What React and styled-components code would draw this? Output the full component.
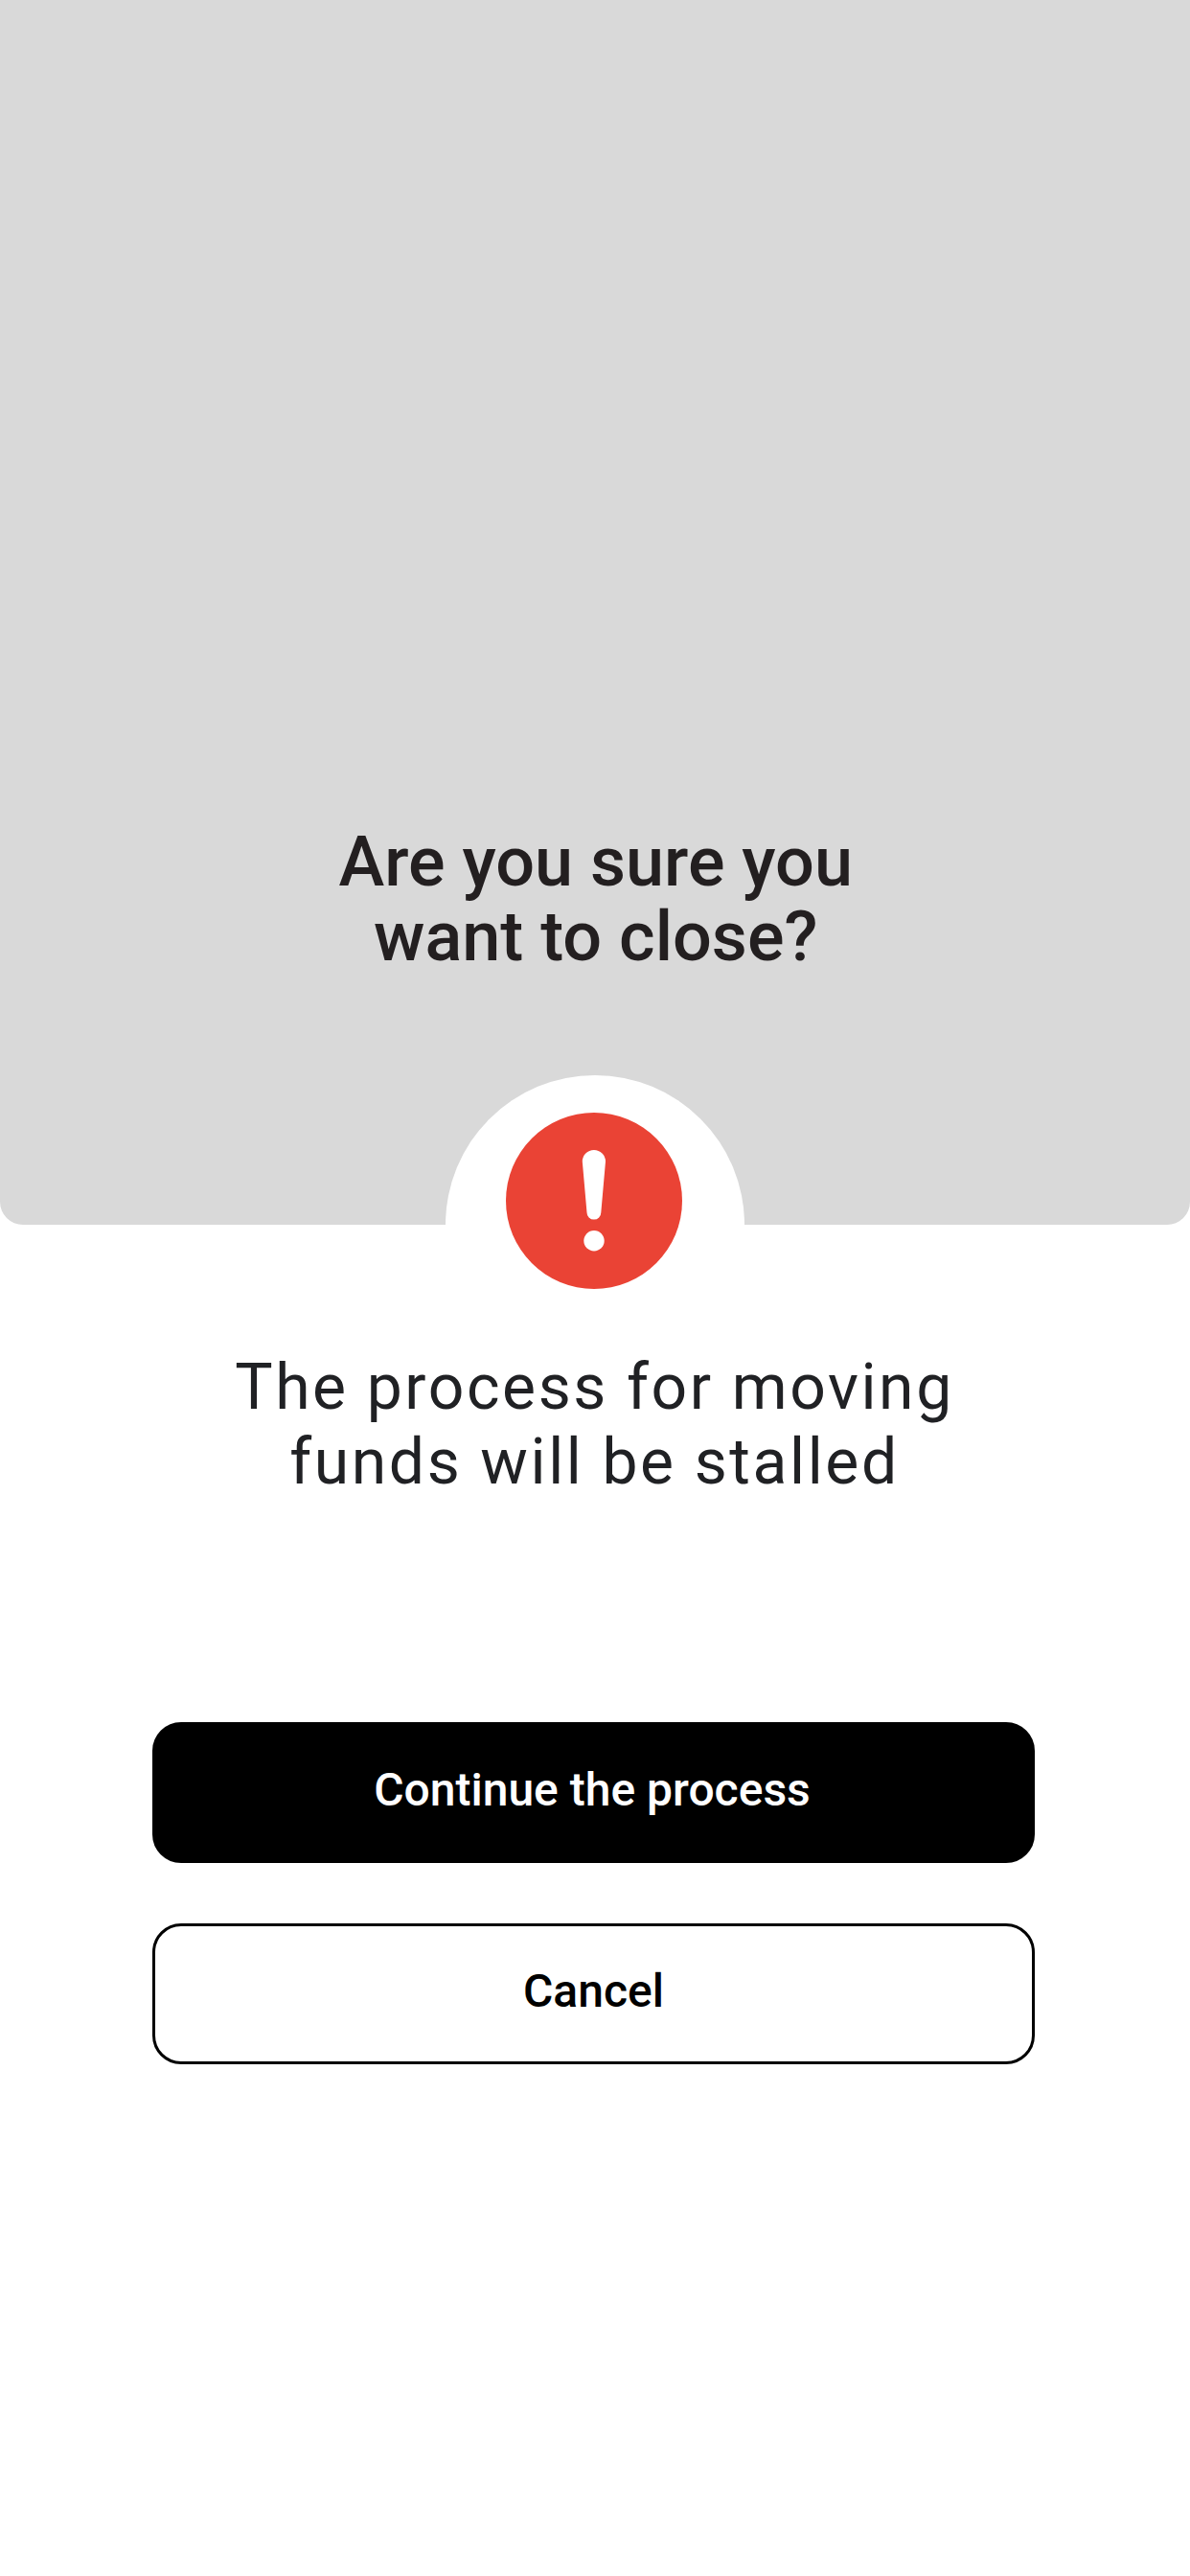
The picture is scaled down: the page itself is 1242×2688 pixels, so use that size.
import React from "react";
import styled, { createGlobalStyle } from "styled-components";

const Global = createGlobalStyle`
  * {
    box-sizing: border-box;
  }
  body {
    margin: 0;
    background: #fff;
    font-family: Roboto, sans-serif;
  }
`;

const Screen = styled.main`
  width: 1242px;
  height: 2688px;
  background: #fff;
  overflow: hidden;
  display: flex;
  flex-direction: column;
  align-items: center;
`;

const Hero = styled.header`
  width: 100%;
  height: 1278px;
  padding-top: 860.5px;
  background: #d9d9d9;
  border-radius: 0 0 24px 24px;
  display: flex;
  flex-direction: column;
  align-items: center;
`;

const Title = styled.h1`
  margin: 0;
  padding-left: 1.5px;
  font-size: 72px;
  line-height: 78px;
  font-weight: 500;
  color: #231f20;
  text-align: center;
  white-space: nowrap;
`;

const Badge = styled.svg`
  display: block;
  flex: none;
  width: 312px;
  height: 312px;
  margin-top: 105.5px;
`;

const Message = styled.p`
  margin: 130.5px 0 0;
  padding-right: 1px;
  font-size: 66px;
  line-height: 78px;
  letter-spacing: 2.6px;
  color: #202124;
  text-align: center;
  white-space: nowrap;
`;

const Actions = styled.div`
  display: flex;
  flex-direction: column;
  gap: 63px;
  width: 921px;
  margin: 232.5px 3px 0 0;
`;

const Button = styled.button`
  height: 147px;
  padding: 0 ${(p) => (p.$primary ? 3 : 0)}px 6px 0;
  border: 3px solid #000;
  border-radius: 30px;
  background: ${(p) => (p.$primary ? "#000" : "#fff")};
  color: ${(p) => (p.$primary ? "#fff" : "#000")};
  font: 500 48px/56px Roboto, sans-serif;
`;

export default function App() {
  return (
    <Screen>
      <Global />
      <Hero>
        <Title>
          Are you sure you
          <br />
          want to close?
        </Title>
        <Badge viewBox="0 0 312 312" aria-hidden="true">
          <circle cx="156" cy="156" r="156" fill="#fff" />
          <circle cx="155" cy="131" r="92" fill="#ea4335" />
          <path
            d="M142.8 90a12.1 12.1 0 0 1 24.2 0l-4.7 53.2a7.4 7.4 0 0 1-14.8 0z"
            fill="#fff"
          />
          <circle cx="155" cy="172.8" r="10.7" fill="#fff" />
        </Badge>
      </Hero>
      <Message>
        The process for moving
        <br />
        funds will be stalled
      </Message>
      <Actions>
        <Button $primary>Continue the process</Button>
        <Button>Cancel</Button>
      </Actions>
    </Screen>
  );
}
